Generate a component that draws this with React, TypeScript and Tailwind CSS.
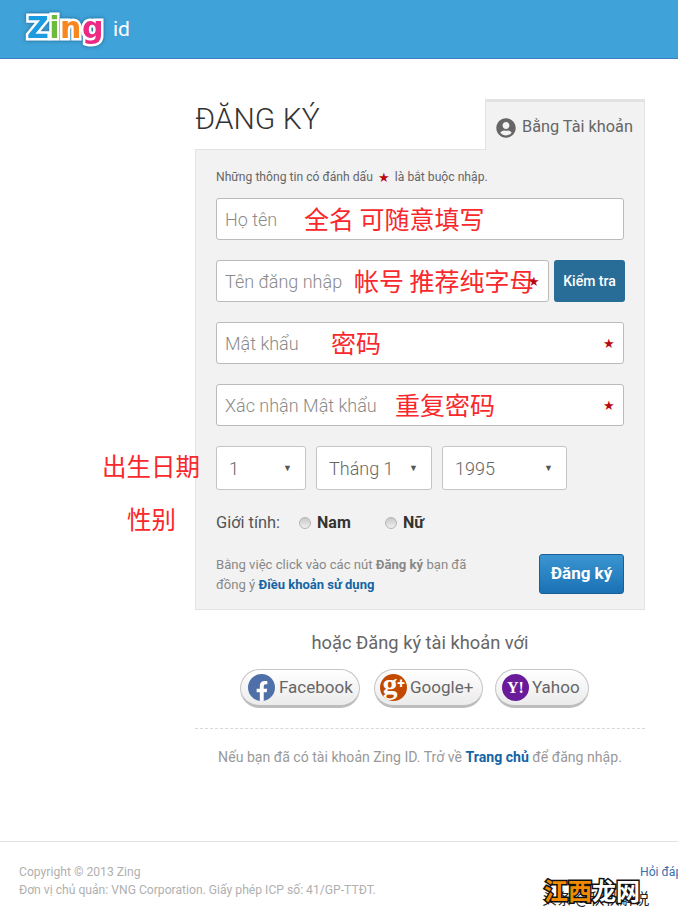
import { FaFacebookF, FaUserCircle } from 'react-icons/fa';

function Star() {
  return <span className="text-[#b8090f] text-[13px] leading-none">★</span>;
}

function Note({ text, left }: { text: string; left: string }) {
  return (
    <span className={`absolute top-[4px] ${left} font-['Noto_Sans_CJK_SC',sans-serif] text-[25px] leading-[32px] text-[#f8282c] whitespace-nowrap`}>
      {text}
    </span>
  );
}

function Field({ placeholder, note, noteLeft, star, width }: { placeholder: string; note: string; noteLeft: string; star?: boolean; width: string }) {
  return (
    <div className={`relative h-[42px] shrink-0 ${width}`}>
      <input
        placeholder={placeholder}
        className="w-full h-full bg-white border border-[#bbbbbb] rounded-[3px] px-[8px] text-[18px] font-light placeholder:text-[#8a8a8a] outline-none"
      />
      <Note text={note} left={noteLeft} />
      {star && (
        <span className="absolute right-[9px] top-[13px] leading-none">
          <Star />
        </span>
      )}
    </div>
  );
}

function DateSelect({ value, width }: { value: string; width: string }) {
  return (
    <div className={`h-[44px] ${width} bg-white border border-[#c4c4c4] rounded-[3px] pl-[12px] pr-[13px] flex items-center justify-between`}>
      <span className="text-[18px] font-light text-[#666]">{value}</span>
      <span className="text-[9px] text-[#555] leading-none">▼</span>
    </div>
  );
}

function Radio({ label }: { label: string }) {
  return (
    <div className="flex items-center gap-[6px]">
      <span className="w-[12px] h-[12px] rounded-full border border-[#b5b5b5] bg-gradient-to-b from-[#c8c8c8] to-[#f0f0f0]"></span>
      <span className="text-[16px] font-bold text-[#333]">{label}</span>
    </div>
  );
}

function SocialButton({ label, color, box, children }: { label: string; color: string; box: string; children: React.ReactNode }) {
  return (
    <div className={`h-[39px] ${box} rounded-full border border-[#c6c6c6] border-b-[3px] border-b-[#bdbdbd] bg-gradient-to-b from-white to-[#ebebeb] flex items-center`}>
      <span className={`relative w-[27px] h-[27px] rounded-full ${color} flex items-center justify-center text-white overflow-hidden`}>{children}</span>
      <span className="text-[17px] text-[#666]">{label}</span>
    </div>
  );
}

export default function App() {
  return (
    <div className="relative w-[678px] h-[922px] overflow-hidden bg-white font-['Roboto',sans-serif]">
      {/* Header */}
      <header className="h-[59px] bg-[#3fa2d8] border-b border-[#3a7fc8] flex items-center pl-[27px]">
        <div className="flex items-center mb-[3px] font-['DejaVu_Sans',sans-serif] font-bold text-[30px] leading-none tracking-[0.5px] [-webkit-text-stroke:5px_white] [paint-order:stroke_fill] [filter:drop-shadow(0_0_1.5px_#2f80b0)_drop-shadow(0_0_1.5px_#2f80b0)]">
          <span className="text-[#1c9ce0]">Z</span>
          <span className="text-[#6cbb3c]">i</span>
          <span className="text-[#f7881f]">n</span>
          <span className="text-[#ec2a84]">g</span>
        </div>
        <span className="ml-[9px] mt-[2px] text-white text-[21px]">id</span>
      </header>

      {/* Main column */}
      <main className="ml-[195px] w-[450px] pt-[40px]">
        <div className="flex items-end justify-between h-[50px]">
          <h1 className="text-[30px] font-light text-[#333] leading-none mb-[15px]">ĐĂNG KÝ</h1>
          <div className="w-[160px] h-[51px] -mb-px relative z-10 bg-[#f2f2f2] border-t-[3px] border-x border-[#e3e3e3] border-b-0 flex items-center pl-[10px] pt-[3px] gap-[6px]">
            <FaUserCircle className="text-[#666] w-[20px] h-[20px]" />
            <span className="text-[16.3px] text-[#666]">Bằng Tài khoản</span>
          </div>
        </div>

        <section className="h-[461px] bg-[#f2f2f2] border border-[#e3e3e3] px-[20px] pt-[19px]">
          <p className="text-[12.15px] leading-[16px] text-[#666] flex items-center gap-[5px]">
            Những thông tin có đánh dấu
            <Star />
            là bắt buộc nhập.
          </p>

          <div className="mt-[13px] flex flex-col gap-[20px]">
            <Field placeholder="Họ tên" note="全名 可随意填写" noteLeft="left-[88px]" width="w-[408px]" />
            <div className="flex gap-[5px] w-[409px]">
              <Field placeholder="Tên đăng nhập" note="帐号 推荐纯字母" noteLeft="left-[138px]" star width="w-[333px]" />
              <button className="w-[71px] h-[42px] shrink-0 rounded-[3px] bg-[#276d98] text-white text-[14px] font-medium">Kiểm tra</button>
            </div>
            <Field placeholder="Mật khẩu" note="密码" noteLeft="left-[115px]" star width="w-[408px]" />
            <Field placeholder="Xác nhận Mật khẩu" note="重复密码" noteLeft="left-[179px]" star width="w-[408px]" />
          </div>

          <div className="mt-[20px] flex gap-[10px]">
            <DateSelect value="1" width="w-[90px]" />
            <DateSelect value="Tháng 1" width="w-[116px]" />
            <DateSelect value="1995" width="w-[125px]" />
          </div>

          <div className="mt-[23px] flex items-center h-[20px]">
            <span className="text-[16.4px] text-[#555]">Giới tính:</span>
            <div className="ml-[19px] w-[86px]">
              <Radio label="Nam" />
            </div>
            <Radio label="Nữ" />
          </div>

          <div className="mt-[21px] flex items-start justify-between">
            <p className="text-[13.1px] leading-[20px] text-[#888] w-[270px] pt-px">
              Bằng việc click vào các nút <b>Đăng ký</b> bạn đã đồng ý <a className="font-bold text-[13px] text-[#1464a5]">Điều khoản sử dụng</a>
            </p>
            <button className="w-[85px] h-[40px] rounded-[3px] border border-[#1a5f95] bg-gradient-to-b from-[#3a95d0] to-[#1a72b5] text-white text-[17px] font-bold">Đăng ký</button>
          </div>
        </section>

        <p className="mt-[22px] text-center text-[18.3px] leading-[22px] text-[#666]">hoặc Đăng ký tài khoản với</p>

        <div className="mt-[15px] flex pl-[45px]">
          <SocialButton label="Facebook" color="bg-[#4f6fa8]" box="w-[120px] pl-[7px] gap-[4px]">
            <FaFacebookF className="w-[20px] h-[20px] mt-[7px]" />
          </SocialButton>
          <SocialButton label="Google+" color="bg-[#c14a00]" box="w-[109px] ml-[14px] pl-[5px] gap-[3px]">
            <span className="font-['Liberation_Serif',serif] font-bold text-[30px] leading-none mb-[8px] mr-[7px]">g</span>
            <span className="absolute right-[2px] top-[2px] font-bold text-[14px] leading-none">+</span>
          </SocialButton>
          <SocialButton label="Yahoo" color="bg-[#6a1b9a]" box="w-[94px] ml-[12px] pl-[6px] gap-[3px]">
            <span className="font-['Liberation_Serif',serif] font-bold text-[16px] leading-none">Y!</span>
          </SocialButton>
        </div>

        <div className="mt-[20px] border-t border-dashed border-[#d8d8d8]"></div>
        <p className="mt-[19px] text-center text-[14.1px] leading-[18px] text-[#999]">
          Nếu bạn đã có tài khoản Zing ID. Trở về <a className="font-bold text-[#1464a5]">Trang chủ</a> để đăng nhập.
        </p>
      </main>

      {/* Footer */}
      <footer className="absolute left-0 right-0 top-[841px] border-t border-[#e3e3e3] pt-[21px] pl-[19px] flex text-[12.15px] leading-[18px] text-[#b0b0b0] whitespace-nowrap">
        <div className="w-[621px] shrink-0">
          <p>Copyright © 2013 Zing</p>
          <p>Đơn vị chủ quản: VNG Corporation. Giấy phép ICP số: 41/GP-TTĐT.</p>
        </div>
        <a className="text-[#3a6fb0]">Hỏi đáp</a>
      </footer>

      {/* Red annotations over the page */}
      <span className="absolute left-[102px] top-[450px] font-['Noto_Sans_CJK_SC',sans-serif] text-[24.5px] leading-[32px] text-[#f8282c]">出生日期</span>
      <span className="absolute left-[127px] top-[503px] font-['Noto_Sans_CJK_SC',sans-serif] text-[24.5px] leading-[32px] text-[#f8282c]">性别</span>

      {/* Watermark */}
      <span className="absolute left-[542px] top-[888px] text-[15px] leading-[20px] text-[#222] font-['Noto_Sans_CJK_SC',sans-serif] whitespace-nowrap">头条 @秋秋解说</span>
      <span className="absolute left-[544px] top-[874px] font-['Noto_Sans_CJK_SC',sans-serif] font-bold text-[24px] leading-[32px] [-webkit-text-stroke:3px_#111] [paint-order:stroke_fill] whitespace-nowrap">
        <span className="text-[#f08a00]">江西</span>
        <span className="text-white">龙网</span>
      </span>
    </div>
  );
}
